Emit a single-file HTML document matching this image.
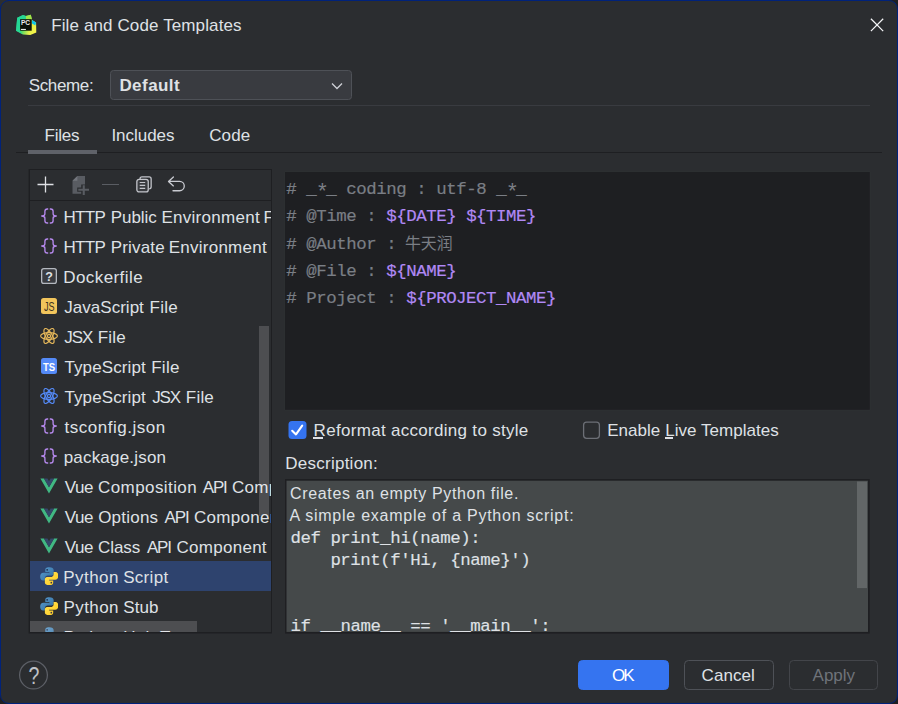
<!DOCTYPE html>
<html lang="en">
<head>
<meta charset="utf-8">
<title>File and Code Templates</title>
<style>
html,body{margin:0;padding:0;width:898px;height:704px;overflow:hidden;background:#1e1f22;}
body{font-family:"Liberation Sans","Noto Sans CJK SC",sans-serif;color:#dfe1e5;font-size:17px;}
.abs{position:absolute;}
#win{position:absolute;left:0;top:0;width:896px;height:702px;border:1px solid #00227a;border-radius:9px;background:#2b2d30;overflow:hidden;}
.t{position:absolute;white-space:nowrap;line-height:20px;height:20px;color:#dfe1e5;}
.hl{position:absolute;height:1px;}
u{text-decoration:none;}
.mn{position:absolute;height:2px;background:#dfe1e5;}
#list{position:absolute;left:29px;top:169px;width:241px;height:462px;overflow:hidden;}
.row{position:absolute;left:0;width:242px;height:30px;}
.row .lbl{position:absolute;top:7px;white-space:pre;line-height:20px;white-space:nowrap;font-size:17px;color:#dfe1e5;}
.row svg{position:absolute;left:11px;top:7px;width:16px;height:16px;}
.sel{background:#2e436e;}
#ed{position:absolute;left:284px;top:171px;width:585px;height:237px;}
.code{position:absolute;left:1.2px;white-space:pre;font-family:"Liberation Mono","Noto Sans CJK SC",monospace;font-size:17.4px;letter-spacing:-0.44px;line-height:20px;height:20px;color:#7a7e85;-webkit-text-stroke:0.2px currentColor;}
.code .cj{font-size:15.9px;letter-spacing:0;margin-left:-1.2px;-webkit-text-stroke:0;}
.v{color:#b189f5;}
.us{position:relative;top:0;}
.us1{position:relative;top:-1px;}
.as{display:inline-block;width:10px;text-align:center;font-size:22px;line-height:0;position:relative;top:4.5px;left:-0.4px;letter-spacing:0;-webkit-text-stroke:0;}
.dm{position:absolute;white-space:pre;line-height:20px;height:20px;color:#dfe1e5;font-family:"Liberation Mono","Noto Sans CJK SC",monospace;font-size:17.4px;letter-spacing:-0.44px;-webkit-text-stroke:0.15px currentColor;}
.btn{position:absolute;top:659px;height:28px;border-radius:4.5px;border:1px solid #4e5157;}
</style>
</head>
<body>
<div class="abs" style="left:0;top:0;width:12px;height:12px;background:#2b2d30;"></div>
<div id="win">
  <!-- panel boxes (page coordinates) -->
  <svg class="abs" style="left:0;top:0" width="896" height="702" viewBox="1 1 896 702">
    <rect x="28.6" y="169" width="243.4" height="464.5" fill="#1e1f22"/>
    <rect x="30" y="170" width="241" height="462" fill="#2b2d30"/>
    <rect x="284.6" y="171.6" width="585.8" height="238.8" fill="#303235"/>
    <rect x="285" y="172" width="584.8" height="237.8" fill="#1e1f22"/>
    <rect x="285.1" y="479" width="584.6" height="154.6" fill="#1e1f22"/>
    <rect x="286.5" y="480.7" width="581.5" height="151.2" fill="#45494a"/>
    <rect x="857" y="481.5" width="10" height="106.6" fill="#626667"/>
  </svg>
  <!-- title bar -->
  <svg class="abs" style="left:14px;top:12px" width="24" height="24" viewBox="0 0 24 24">
    <defs>
      <linearGradient id="g1" x1="0" y1="0.3" x2="1" y2="0.7"><stop offset="0" stop-color="#21d789"/><stop offset="0.45" stop-color="#5fdc62"/><stop offset="0.75" stop-color="#e4ef48"/><stop offset="1" stop-color="#f6f54a"/></linearGradient>
    </defs>
    <path d="M2.2 4.7 L8 2 L10.9 3 L15.8 1.8 L17 7.1 L21.1 9.5 L21.3 19.6 L15.3 22 L8 21.6 L1 17.7 Z" fill="url(#g1)"/>
    <path d="M2.2 4.7 L8 2 L10.9 3 L11 6.2 L5.1 6.2 L5.1 17.7 L8 21.6 L1 17.7 Z" fill="#22d69a" opacity="0.85"/><path d="M10.9 3 L15.8 1.8 L16.9 6.2 L11 6.2 Z" fill="#9fe548"/>
    <path d="M17 7.1 L21.1 9.5 L20.3 12.6 L17 10.5 Z" fill="#0cc6ee"/>
    <rect x="5.1" y="6.2" width="11.6" height="11.5" fill="#0c0f08"/>
    <text x="5.9" y="11.9" font-family="Liberation Sans,sans-serif" font-weight="bold" font-size="6.8" fill="#ececec" textLength="9.2" lengthAdjust="spacingAndGlyphs">PC</text>
    <rect x="5.9" y="15.9" width="5" height="1.1" fill="#e8e8e8"/>
  </svg>
  <div class="t" id="title" style="left:50.2px;top:15px;font-size:17px;letter-spacing:0.12px;">File and Code Templates</div>
  <svg class="abs" style="left:868px;top:16px" width="16" height="16" viewBox="0 0 16 16"><path d="M1.9 1.8 L14.2 14.1 M14.2 1.8 L1.9 14.1" stroke="#f2f3f5" stroke-width="1.25" fill="none"/></svg>

  <!-- scheme -->
  <div class="t" id="scheme" style="left:27.7px;top:75px;font-size:17px;letter-spacing:-0.35px;">Scheme:</div>
  <div class="abs" style="left:109px;top:69px;width:240px;height:28px;border:1px solid #4e5157;border-radius:3.5px;background:#393b40;"></div>
  <div class="t" id="default" style="left:118.4px;top:75px;font-size:17px;letter-spacing:0.45px;font-weight:bold;">Default</div>
  <svg class="abs" style="left:329px;top:79px" width="14" height="12" viewBox="0 0 14 12"><path d="M2 3.5 L7 8.5 L12 3.5" stroke="#ced0d6" stroke-width="1.3" fill="none"/></svg>
  <div class="hl" style="left:27px;top:104px;width:842px;background:#393b40;"></div>

  <!-- tabs -->
  <div class="t" id="tab1" style="left:43.6px;top:125px;font-size:17px;letter-spacing:-0.25px;">Files</div>
  <div class="t" id="tab2" style="left:110.4px;top:125px;font-size:17px;letter-spacing:-0.03px;">Includes</div>
  <div class="t" id="tab3" style="left:208.2px;top:125px;font-size:17px;letter-spacing:0.12px;">Code</div>
  <div class="hl" style="left:15px;top:151px;width:866px;background:#1e1f22;"></div>
  <div class="abs" style="left:27px;top:149px;width:69px;height:4px;background:#5f6269;"></div>

  <!-- list -->
  <div id="list">
    <div class="row" style="top:31px"><svg viewBox="0 0 16 16"><path d="M7.2 1 H6.3 Q3.9 1 3.9 3.3 V5.8 Q3.9 8 0.7 8 Q3.9 8 3.9 10.2 V12.7 Q3.9 15 6.3 15 H7.2 M8.8 1 H9.7 Q12.1 1 12.1 3.3 V5.8 Q12.1 8 15.3 8 Q12.1 8 12.1 10.2 V12.7 Q12.1 15 9.7 15 H8.8" fill="none" stroke="#b589ec" stroke-width="1.35" stroke-linejoin="round"/></svg><span class="lbl" style="left:33.48px;letter-spacing:-0.64px">HTTP </span><span class="lbl" style="left:80.72px;letter-spacing:-0.05px">Public </span><span class="lbl" style="left:131.48px;letter-spacing:0.27px">Environment </span><span class="lbl" style="left:233.61px;letter-spacing:0.22px">File</span></div>
    <div class="row" style="top:61px"><svg viewBox="0 0 16 16"><path d="M7.2 1 H6.3 Q3.9 1 3.9 3.3 V5.8 Q3.9 8 0.7 8 Q3.9 8 3.9 10.2 V12.7 Q3.9 15 6.3 15 H7.2 M8.8 1 H9.7 Q12.1 1 12.1 3.3 V5.8 Q12.1 8 15.3 8 Q12.1 8 12.1 10.2 V12.7 Q12.1 15 9.7 15 H8.8" fill="none" stroke="#b589ec" stroke-width="1.35" stroke-linejoin="round"/></svg><span class="lbl" style="left:33.48px;letter-spacing:-0.64px">HTTP </span><span class="lbl" style="left:80.72px;letter-spacing:0.17px">Private </span><span class="lbl" style="left:138.65px;letter-spacing:0.26px">Environment </span><span class="lbl" style="left:242.10px;letter-spacing:0.22px">File</span></div>
    <div class="row" style="top:91px"><svg viewBox="0 0 16 16"><rect x="0.65" y="0.65" width="14.7" height="14.7" rx="2.2" fill="#393b40" stroke="#b4b8bf" stroke-width="1.3"/><text x="8" y="12.6" text-anchor="middle" font-family="Liberation Sans,sans-serif" font-weight="bold" font-size="12.5" fill="#dfe1e5">?</text></svg><span class="lbl" style="left:33.26px;letter-spacing:0.42px">Dockerfile</span></div>
    <div class="row" style="top:121px"><svg viewBox="0 0 16 16"><rect x="0" y="0" width="16" height="16" rx="2.5" fill="#f2c55c"/><text x="3" y="13.4" textLength="10.6" lengthAdjust="spacingAndGlyphs" font-family="Liberation Sans,sans-serif" font-size="13" fill="#3d3223">JS</text></svg><span class="lbl" style="left:34.36px;letter-spacing:0.01px">JavaScript </span><span class="lbl" style="left:119.61px;letter-spacing:0.22px">File</span></div>
    <div class="row" style="top:151px"><svg viewBox="0 0 18 16" style="left:10px;width:18px"><g fill="none" stroke="#e5b75a" stroke-width="1.2"><ellipse cx="9" cy="8" rx="8.4" ry="3.3"/><ellipse cx="9" cy="8" rx="8.4" ry="3.3" transform="rotate(60 9 8)"/><ellipse cx="9" cy="8" rx="8.4" ry="3.3" transform="rotate(120 9 8)"/><circle cx="9" cy="8" r="1.6" stroke-width="1.3"/></g></svg><span class="lbl" style="left:34.36px;letter-spacing:-1.13px">JSX </span><span class="lbl" style="left:67.67px;letter-spacing:0.23px">File</span></div>
    <div class="row" style="top:181px"><svg viewBox="0 0 16 16"><rect x="0" y="0" width="16" height="16" rx="2.5" fill="#548af7"/><text x="1.9" y="12.6" textLength="12.2" lengthAdjust="spacingAndGlyphs" font-family="Liberation Sans,sans-serif" font-weight="bold" font-size="10.7" fill="#fff">TS</text></svg><span class="lbl" style="left:34.47px;letter-spacing:0.10px">TypeScript </span><span class="lbl" style="left:121.20px;letter-spacing:0.28px">File</span></div>
    <div class="row" style="top:211px"><svg viewBox="0 0 18 16" style="left:10px;width:18px"><g fill="none" stroke="#548af7" stroke-width="1.2"><ellipse cx="9" cy="8" rx="8.4" ry="3.3"/><ellipse cx="9" cy="8" rx="8.4" ry="3.3" transform="rotate(60 9 8)"/><ellipse cx="9" cy="8" rx="8.4" ry="3.3" transform="rotate(120 9 8)"/><circle cx="9" cy="8" r="1.6" stroke-width="1.3"/></g></svg><span class="lbl" style="left:34.47px;letter-spacing:0.10px">TypeScript </span><span class="lbl" style="left:122.14px;letter-spacing:-1.14px">JSX </span><span class="lbl" style="left:155.85px;letter-spacing:0.19px">File</span></div>
    <div class="row" style="top:241px"><svg viewBox="0 0 16 16"><path d="M7.2 1 H6.3 Q3.9 1 3.9 3.3 V5.8 Q3.9 8 0.7 8 Q3.9 8 3.9 10.2 V12.7 Q3.9 15 6.3 15 H7.2 M8.8 1 H9.7 Q12.1 1 12.1 3.3 V5.8 Q12.1 8 15.3 8 Q12.1 8 12.1 10.2 V12.7 Q12.1 15 9.7 15 H8.8" fill="none" stroke="#b589ec" stroke-width="1.35" stroke-linejoin="round"/></svg><span class="lbl" style="left:34.48px;letter-spacing:0.52px">tsconfig.json</span></div>
    <div class="row" style="top:271px"><svg viewBox="0 0 16 16"><path d="M7.2 1 H6.3 Q3.9 1 3.9 3.3 V5.8 Q3.9 8 0.7 8 Q3.9 8 3.9 10.2 V12.7 Q3.9 15 6.3 15 H7.2 M8.8 1 H9.7 Q12.1 1 12.1 3.3 V5.8 Q12.1 8 15.3 8 Q12.1 8 12.1 10.2 V12.7 Q12.1 15 9.7 15 H8.8" fill="none" stroke="#b589ec" stroke-width="1.35" stroke-linejoin="round"/></svg><span class="lbl" style="left:33.64px;letter-spacing:0.20px">package.json</span></div>
    <div class="row" style="top:301px"><svg viewBox="0 0 18 16" style="left:10px;width:18px"><path d="M0.4 0.6 H4 L9 9.3 L14 0.6 H17.6 L9 15.4 Z" fill="#41b883"/><path d="M4 0.6 H7.5 L9 3.2 L10.5 0.6 H14 L9 9.3 Z" fill="#35496a"/></svg><span class="lbl" style="left:34.69px;letter-spacing:-0.48px">Vue </span><span class="lbl" style="left:68.03px;letter-spacing:0.42px">Composition </span><span class="lbl" style="left:172.78px;letter-spacing:-1.18px">API </span><span class="lbl" style="left:202.03px;letter-spacing:0.28px">Component</span></div>
    <div class="row" style="top:331px"><svg viewBox="0 0 18 16" style="left:10px;width:18px"><path d="M0.4 0.6 H4 L9 9.3 L14 0.6 H17.6 L9 15.4 Z" fill="#41b883"/><path d="M4 0.6 H7.5 L9 3.2 L10.5 0.6 H14 L9 9.3 Z" fill="#35496a"/></svg><span class="lbl" style="left:34.69px;letter-spacing:-0.48px">Vue </span><span class="lbl" style="left:68.14px;letter-spacing:0.23px">Options </span><span class="lbl" style="left:134.50px;letter-spacing:-1.08px">API </span><span class="lbl" style="left:164.03px;letter-spacing:0.28px">Component</span></div>
    <div class="row" style="top:361px"><svg viewBox="0 0 18 16" style="left:10px;width:18px"><path d="M0.4 0.6 H4 L9 9.3 L14 0.6 H17.6 L9 15.4 Z" fill="#41b883"/><path d="M4 0.6 H7.5 L9 3.2 L10.5 0.6 H14 L9 9.3 Z" fill="#35496a"/></svg><span class="lbl" style="left:34.69px;letter-spacing:-0.48px">Vue </span><span class="lbl" style="left:68.03px;letter-spacing:-0.08px">Class </span><span class="lbl" style="left:116.88px;letter-spacing:-1.15px">API </span><span class="lbl" style="left:146.48px;letter-spacing:0.28px">Component</span></div>
    <div class="row sel" style="top:391px"><svg viewBox="0.55 0.65 16.9 16.7" style="left:9.8px;top:5.6px;width:18.5px;height:18.5px"><defs><linearGradient id="pb1" x1="0" y1="0" x2="1" y2="1"><stop offset="0" stop-color="#5a9fd4"/><stop offset="1" stop-color="#306998"/></linearGradient><linearGradient id="py1" x1="0" y1="0" x2="1" y2="1"><stop offset="0" stop-color="#ffe35a"/><stop offset="1" stop-color="#ffc91a"/></linearGradient></defs><path d="M8.9 0.8 C6 0.8 5.4 2 5.4 3.3 V5.2 H9.1 V5.9 H3.6 C1.8 5.9 0.7 7.2 0.7 9.4 C0.7 11.6 1.8 12.9 3.3 12.9 H5 V10.9 C5 9.4 6.2 8.3 7.7 8.3 H11 C12.2 8.3 13 7.4 13 6.2 V3.3 C13 2 11.9 0.8 8.9 0.8 Z" fill="url(#pb1)"/><circle cx="7.1" cy="3.1" r="0.8" fill="#22304f"/><path d="M9.1 17.2 C12 17.2 12.6 16 12.6 14.7 V12.8 H8.9 V12.1 H14.4 C16.2 12.1 17.3 10.8 17.3 8.6 C17.3 6.4 16.2 5.1 14.7 5.1 H13 V7.1 C13 8.6 11.8 9.7 10.3 9.7 H7 C5.8 9.7 5 10.6 5 11.8 V14.7 C5 16 6.1 17.2 9.1 17.2 Z" fill="url(#py1)"/><circle cx="10.9" cy="14.9" r="0.8" fill="#3a3a4a"/></svg><span class="lbl" style="left:33.28px;letter-spacing:0.46px">Python </span><span class="lbl" style="left:93.14px;letter-spacing:0.32px">Script</span></div>
    <div class="row" style="top:421px"><svg viewBox="0.55 0.65 16.9 16.7" style="left:9.8px;top:5.6px;width:18.5px;height:18.5px"><defs><linearGradient id="pb2" x1="0" y1="0" x2="1" y2="1"><stop offset="0" stop-color="#5a9fd4"/><stop offset="1" stop-color="#306998"/></linearGradient><linearGradient id="py2" x1="0" y1="0" x2="1" y2="1"><stop offset="0" stop-color="#ffe35a"/><stop offset="1" stop-color="#ffc91a"/></linearGradient></defs><path d="M8.9 0.8 C6 0.8 5.4 2 5.4 3.3 V5.2 H9.1 V5.9 H3.6 C1.8 5.9 0.7 7.2 0.7 9.4 C0.7 11.6 1.8 12.9 3.3 12.9 H5 V10.9 C5 9.4 6.2 8.3 7.7 8.3 H11 C12.2 8.3 13 7.4 13 6.2 V3.3 C13 2 11.9 0.8 8.9 0.8 Z" fill="url(#pb2)"/><circle cx="7.1" cy="3.1" r="0.8" fill="#22304f"/><path d="M9.1 17.2 C12 17.2 12.6 16 12.6 14.7 V12.8 H8.9 V12.1 H14.4 C16.2 12.1 17.3 10.8 17.3 8.6 C17.3 6.4 16.2 5.1 14.7 5.1 H13 V7.1 C13 8.6 11.8 9.7 10.3 9.7 H7 C5.8 9.7 5 10.6 5 11.8 V14.7 C5 16 6.1 17.2 9.1 17.2 Z" fill="url(#py2)"/><circle cx="10.9" cy="14.9" r="0.8" fill="#3a3a4a"/></svg><span class="lbl" style="left:33.48px;letter-spacing:0.41px">Python </span><span class="lbl" style="left:93.31px;letter-spacing:0.09px">Stub</span></div>
    <div class="row" style="top:451px"><svg viewBox="0.55 0.65 16.9 16.7" style="left:9.8px;top:5.6px;width:18.5px;height:18.5px"><defs><linearGradient id="pb3" x1="0" y1="0" x2="1" y2="1"><stop offset="0" stop-color="#5a9fd4"/><stop offset="1" stop-color="#306998"/></linearGradient><linearGradient id="py3" x1="0" y1="0" x2="1" y2="1"><stop offset="0" stop-color="#ffe35a"/><stop offset="1" stop-color="#ffc91a"/></linearGradient></defs><path d="M8.9 0.8 C6 0.8 5.4 2 5.4 3.3 V5.2 H9.1 V5.9 H3.6 C1.8 5.9 0.7 7.2 0.7 9.4 C0.7 11.6 1.8 12.9 3.3 12.9 H5 V10.9 C5 9.4 6.2 8.3 7.7 8.3 H11 C12.2 8.3 13 7.4 13 6.2 V3.3 C13 2 11.9 0.8 8.9 0.8 Z" fill="url(#pb3)"/><circle cx="7.1" cy="3.1" r="0.8" fill="#22304f"/><path d="M9.1 17.2 C12 17.2 12.6 16 12.6 14.7 V12.8 H8.9 V12.1 H14.4 C16.2 12.1 17.3 10.8 17.3 8.6 C17.3 6.4 16.2 5.1 14.7 5.1 H13 V7.1 C13 8.6 11.8 9.7 10.3 9.7 H7 C5.8 9.7 5 10.6 5 11.8 V14.7 C5 16 6.1 17.2 9.1 17.2 Z" fill="url(#py3)"/><circle cx="10.9" cy="14.9" r="0.8" fill="#3a3a4a"/></svg><span class="lbl" style="left:33.48px;letter-spacing:0.41px">Python </span><span class="lbl" style="left:93.20px;letter-spacing:0.30px">Unit </span><span class="lbl" style="left:130.00px;letter-spacing:0.30px">Test</span></div>
    <div class="abs" style="left:0;top:0;width:242px;height:30px;background:#2b2d30;"></div>
    <div class="hl" style="left:0;top:30px;width:242px;background:#1e1f22;"></div>
    <svg class="abs" style="left:7px;top:6px" width="17" height="17" viewBox="0 0 17 17"><path d="M8.5 0.5 V16.5 M0.5 8.5 H16.5" stroke="#dfe1e5" stroke-width="1.3" fill="none"/></svg>
    <svg class="abs" style="left:42px;top:5px" width="18" height="21" viewBox="0 0 18 21"><path d="M0.5 5.8 L5.4 1 H13 V9.4 H9.2 V12.6 H5.2 V16.8 H9.2 V18.8 H0.5 Z" fill="#595c62"/><path d="M0.5 5.8 L5.4 1 V5.8 Z" fill="#73767d"/><path d="M11.75 10.2 V20 M6.3 14.7 H17" stroke="#595c62" stroke-width="2.1" fill="none"/></svg>
    <div class="abs" style="left:72px;top:14px;width:17px;height:1px;background:#5a5d63;"></div>
    <svg class="abs" style="left:105px;top:6px" width="18" height="18" viewBox="0 0 18 18"><path d="M5 3.2 V2.9 Q5 0.85 7 0.85 H14.1 Q16.15 0.85 16.15 2.9 V10.8 Q16.15 12.8 14.2 12.9" fill="none" stroke="#c3c5cb" stroke-width="1.3"/><rect x="1.85" y="3.35" width="11.4" height="12.6" rx="2.2" fill="#3a3c40" stroke="#c3c5cb" stroke-width="1.3"/><path d="M4.7 6.5 H10.2 M4.7 9.4 H10.2 M4.7 12.3 H10.2" stroke="#c3c5cb" stroke-width="1.2"/></svg>
    <svg class="abs" style="left:137px;top:5px" width="20" height="18" viewBox="0 0 20 18"><path d="M6.4 1.9 L1.5 6.4 L6.4 10.9 M1.5 6.4 H12.6 A4.675 4.675 0 0 1 12.6 15.75 H6" fill="none" stroke="#c9cbd1" stroke-width="1.3" stroke-linejoin="round" stroke-linecap="round"/></svg>
    <div class="abs" style="left:229px;top:156px;width:10px;height:190px;background:rgba(255,255,255,0.16);"></div>
    <div class="abs" style="left:0;top:451px;width:167px;height:11px;background:rgba(255,255,255,0.16);"></div>
  </div>

  <!-- editor -->
  <div id="ed">
    <div class="code" style="top:8px"># <span class="us">_</span><span class="as">*</span><span class="us">_</span> coding : utf-8 <span class="us">_</span><span class="as">*</span><span class="us">_</span></div>
    <div class="code" style="top:35px"># @Time : <span class="v">${DATE} ${TIME}</span></div>
    <div class="code" style="top:63px"># @Author : <span class="cj">牛天润</span></div>
    <div class="code" style="top:90px"># @File : <span class="v">${NAME}</span></div>
    <div class="code" style="top:117px"># Project : <span class="v">${PROJECT<span class="us">_</span>NAME}</span></div>
  </div>

  <!-- checkboxes -->
  <svg class="abs" style="left:287px;top:419px" width="20" height="20" viewBox="0 0 20 20"><rect x="0.5" y="1" width="18" height="18" rx="3.5" fill="#3574f0"/><path d="M4.2 10.8 L8 14.4 L14.2 5.6" stroke="#fff" stroke-width="2.1" fill="none" stroke-linecap="round" stroke-linejoin="round"/></svg>
  <div class="t" id="cb1" style="left:312.6px;top:420px;font-size:17px;letter-spacing:0.30px;"><u>R</u>eformat according to style</div>
  <div class="mn" style="left:312.3px;top:436px;width:10px;"></div>
  <svg class="abs" style="left:581px;top:420px" width="20" height="20" viewBox="582 421 20 20"><rect x="583.6" y="422.1" width="15.8" height="16.2" rx="3" fill="none" stroke="#6c6f76" stroke-width="1.3"/></svg>
  <div class="t" id="cb2" style="left:606.2px;top:420px;font-size:17px;letter-spacing:0.04px;">Enable <u>L</u>ive Templates</div>
  <div class="mn" style="left:664px;top:436px;width:8px;"></div>
  <div class="t" id="dlabel" style="left:284.2px;top:453px;font-size:17px;letter-spacing:0.26px;">Description:</div>

  <!-- description -->
  <div class="t" id="d1" style="left:289.0px;top:483px;font-size:16px;letter-spacing:0.66px;">Creates an empty Python file.</div>
  <div class="t" id="d2" style="left:288.5px;top:505px;font-size:16px;letter-spacing:0.75px;">A simple example of a Python script:</div>
  <div class="dm" style="left:289.4px;top:528px">def print<span class="us">_</span>hi(name):</div>
  <div class="dm" style="left:289.4px;top:550px">    print(f'Hi, {name}')</div>
  <div class="dm" style="left:289.4px;top:616px;height:16px;overflow:hidden;">if <span class="us1">__</span>name<span class="us1">__</span> == '<span class="us1">__</span>main<span class="us1">__</span>':</div>

  <!-- footer -->
  <svg class="abs" style="left:14px;top:656px" width="38" height="38" viewBox="15 657 38 38"><circle cx="33.5" cy="675.05" r="13.9" fill="none" stroke="#5c5f66" stroke-width="1.25"/><text x="28.4" y="683.7" textLength="10.9" lengthAdjust="spacingAndGlyphs" font-family="Liberation Sans,sans-serif" font-size="24.5" fill="#bfc1c7">?</text></svg>
  <div class="btn" style="left:577px;width:89px;background:#3574f0;border-color:#3574f0;"></div>
  <div class="btn" style="left:683px;width:87.5px;"></div>
  <div class="btn" style="left:788px;width:87px;border-color:#43454a;"></div>
  <div class="t" id="ok" style="left:611.1px;top:665px;font-size:17px;letter-spacing:-1.96px;color:#fff;">OK</div>
  <div class="t" id="cancel" style="left:700.6px;top:665px;font-size:17px;letter-spacing:0.06px;">Cancel</div>
  <div class="t" id="apply" style="left:811.6px;top:665px;font-size:17px;letter-spacing:-0.01px;color:#6f737a;">Apply</div>
</div>
</body>
</html>
